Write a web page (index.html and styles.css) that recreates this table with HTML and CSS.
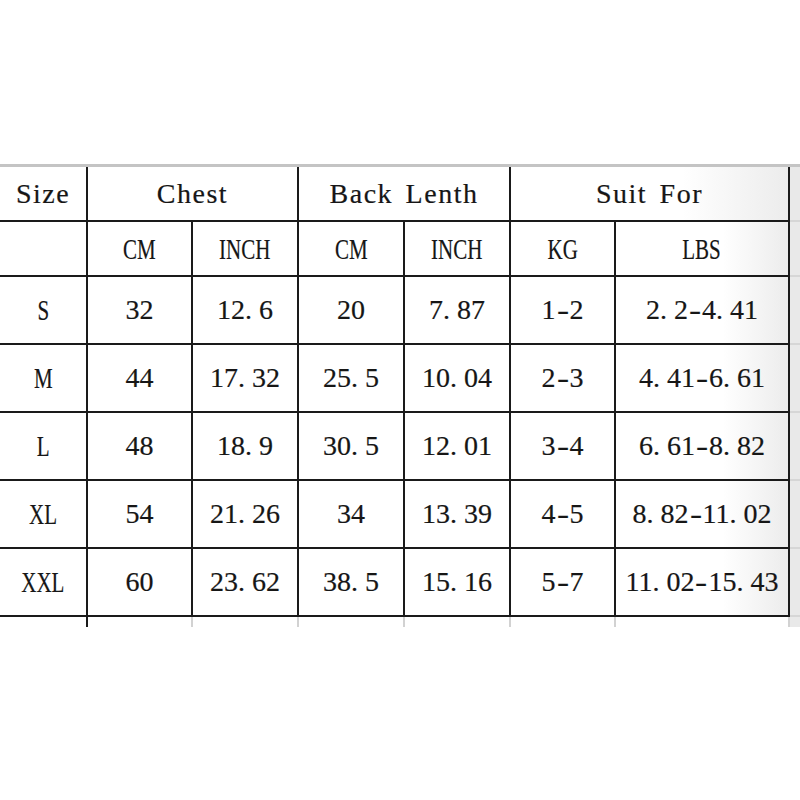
FILE: index.html
```html
<!DOCTYPE html>
<html lang="en">
<head>
<meta charset="utf-8">
<title>Size Chart</title>
<link rel="stylesheet" href="styles.css">
</head>
<body>
<div class="page">
  <div class="sheet">
    <div class="cell head">Size</div>
    <div class="cell head span2">Chest</div>
    <div class="cell head span2">Back Lenth</div>
    <div class="cell head span2 last wide">Suit For</div>
    <div class="cell strip"></div>

    <div class="cell"></div>
    <div class="cell"><span class="cap">CM</span></div>
    <div class="cell"><span class="cap">INCH</span></div>
    <div class="cell"><span class="cap">CM</span></div>
    <div class="cell"><span class="cap">INCH</span></div>
    <div class="cell"><span class="cap">KG</span></div>
    <div class="cell last"><span class="cap">LBS</span></div>
    <div class="cell strip"></div>

    <div class="cell"><span class="cap">S</span></div>
    <div class="cell">32</div>
    <div class="cell">12<span class="dot">.</span>6</div>
    <div class="cell">20</div>
    <div class="cell">7<span class="dot">.</span>87</div>
    <div class="cell">1<span class="dash">-</span>2</div>
    <div class="cell last">2<span class="dot">.</span>2<span class="dash">-</span>4<span class="dot">.</span>41</div>
    <div class="cell strip"></div>

    <div class="cell"><span class="cap">M</span></div>
    <div class="cell">44</div>
    <div class="cell">17<span class="dot">.</span>32</div>
    <div class="cell">25<span class="dot">.</span>5</div>
    <div class="cell">10<span class="dot">.</span>04</div>
    <div class="cell">2<span class="dash">-</span>3</div>
    <div class="cell last">4<span class="dot">.</span>41<span class="dash">-</span>6<span class="dot">.</span>61</div>
    <div class="cell strip"></div>

    <div class="cell"><span class="cap">L</span></div>
    <div class="cell">48</div>
    <div class="cell">18<span class="dot">.</span>9</div>
    <div class="cell">30<span class="dot">.</span>5</div>
    <div class="cell">12<span class="dot">.</span>01</div>
    <div class="cell">3<span class="dash">-</span>4</div>
    <div class="cell last">6<span class="dot">.</span>61<span class="dash">-</span>8<span class="dot">.</span>82</div>
    <div class="cell strip"></div>

    <div class="cell"><span class="cap">XL</span></div>
    <div class="cell">54</div>
    <div class="cell">21<span class="dot">.</span>26</div>
    <div class="cell">34</div>
    <div class="cell">13<span class="dot">.</span>39</div>
    <div class="cell">4<span class="dash">-</span>5</div>
    <div class="cell last">8<span class="dot">.</span>82<span class="dash">-</span>11<span class="dot">.</span>02</div>
    <div class="cell strip"></div>

    <div class="cell"><span class="cap">XXL</span></div>
    <div class="cell">60</div>
    <div class="cell">23<span class="dot">.</span>62</div>
    <div class="cell">38<span class="dot">.</span>5</div>
    <div class="cell">15<span class="dot">.</span>16</div>
    <div class="cell">5<span class="dash">-</span>7</div>
    <div class="cell last">11<span class="dot">.</span>02<span class="dash">-</span>15<span class="dot">.</span>43</div>
    <div class="cell strip"></div>

    <div class="stub dark"></div>
    <div class="stub"></div>
    <div class="stub"></div>
    <div class="stub"></div>
    <div class="stub"></div>
    <div class="stub"></div>
    <div class="stub"></div>
    <div class="stub strip-stub"></div>
  </div>
</div>
</body>
</html>
```

FILE: styles.css
```css
html, body {
  margin: 0;
  padding: 0;
  background: #ffffff;
}

.page {
  width: 800px;
  height: 800px;
  overflow: hidden;
  padding-top: 164px;
  box-sizing: border-box;
}

.sheet {
  display: grid;
  grid-template-columns: 88px 105px 106px 106px 106px 105px 174px 10px;
  grid-template-rows: 55px 55px 68px 68px 68px 68px 68px 10px;
  border-top: 3px solid #c4c4c4;
  font-family: "Liberation Serif", "Times New Roman", serif;
  font-size: 28px;
  color: #161616;
}

.cell {
  box-sizing: border-box;
  border-right: 2px solid #1a1a1a;
  border-bottom: 2px solid #1a1a1a;
  display: flex;
  align-items: center;
  justify-content: center;
  white-space: nowrap;
  -webkit-text-stroke: 0.2px #161616;
}

.head {
  letter-spacing: 1.5px;
  word-spacing: 4px;
  padding-top: 1px;
}

.span2 {
  grid-column: span 2;
}

.last {
  background: linear-gradient(to right, #ffffff 62%, #ececec);
}

.strip {
  background: #e9e9e9;
  border-right: none;
  border-bottom: 2px solid #d6d6d6;
}

.cap {
  display: inline-block;
  font-size: 30px;
  transform: scaleX(0.7);
}

.dot {
  display: inline-block;
  width: 14px;
  text-align: left;
}

.dash {
  display: inline-block;
  width: 14px;
  text-align: center;
  transform: scaleX(1.3);
}

.stub {
  box-sizing: border-box;
  border-right: 2px solid #d2d2d2;
}

.stub.dark {
  border-right-color: #1a1a1a;
}

.strip-stub {
  background: #e9e9e9;
  border-right: none;
}
```
